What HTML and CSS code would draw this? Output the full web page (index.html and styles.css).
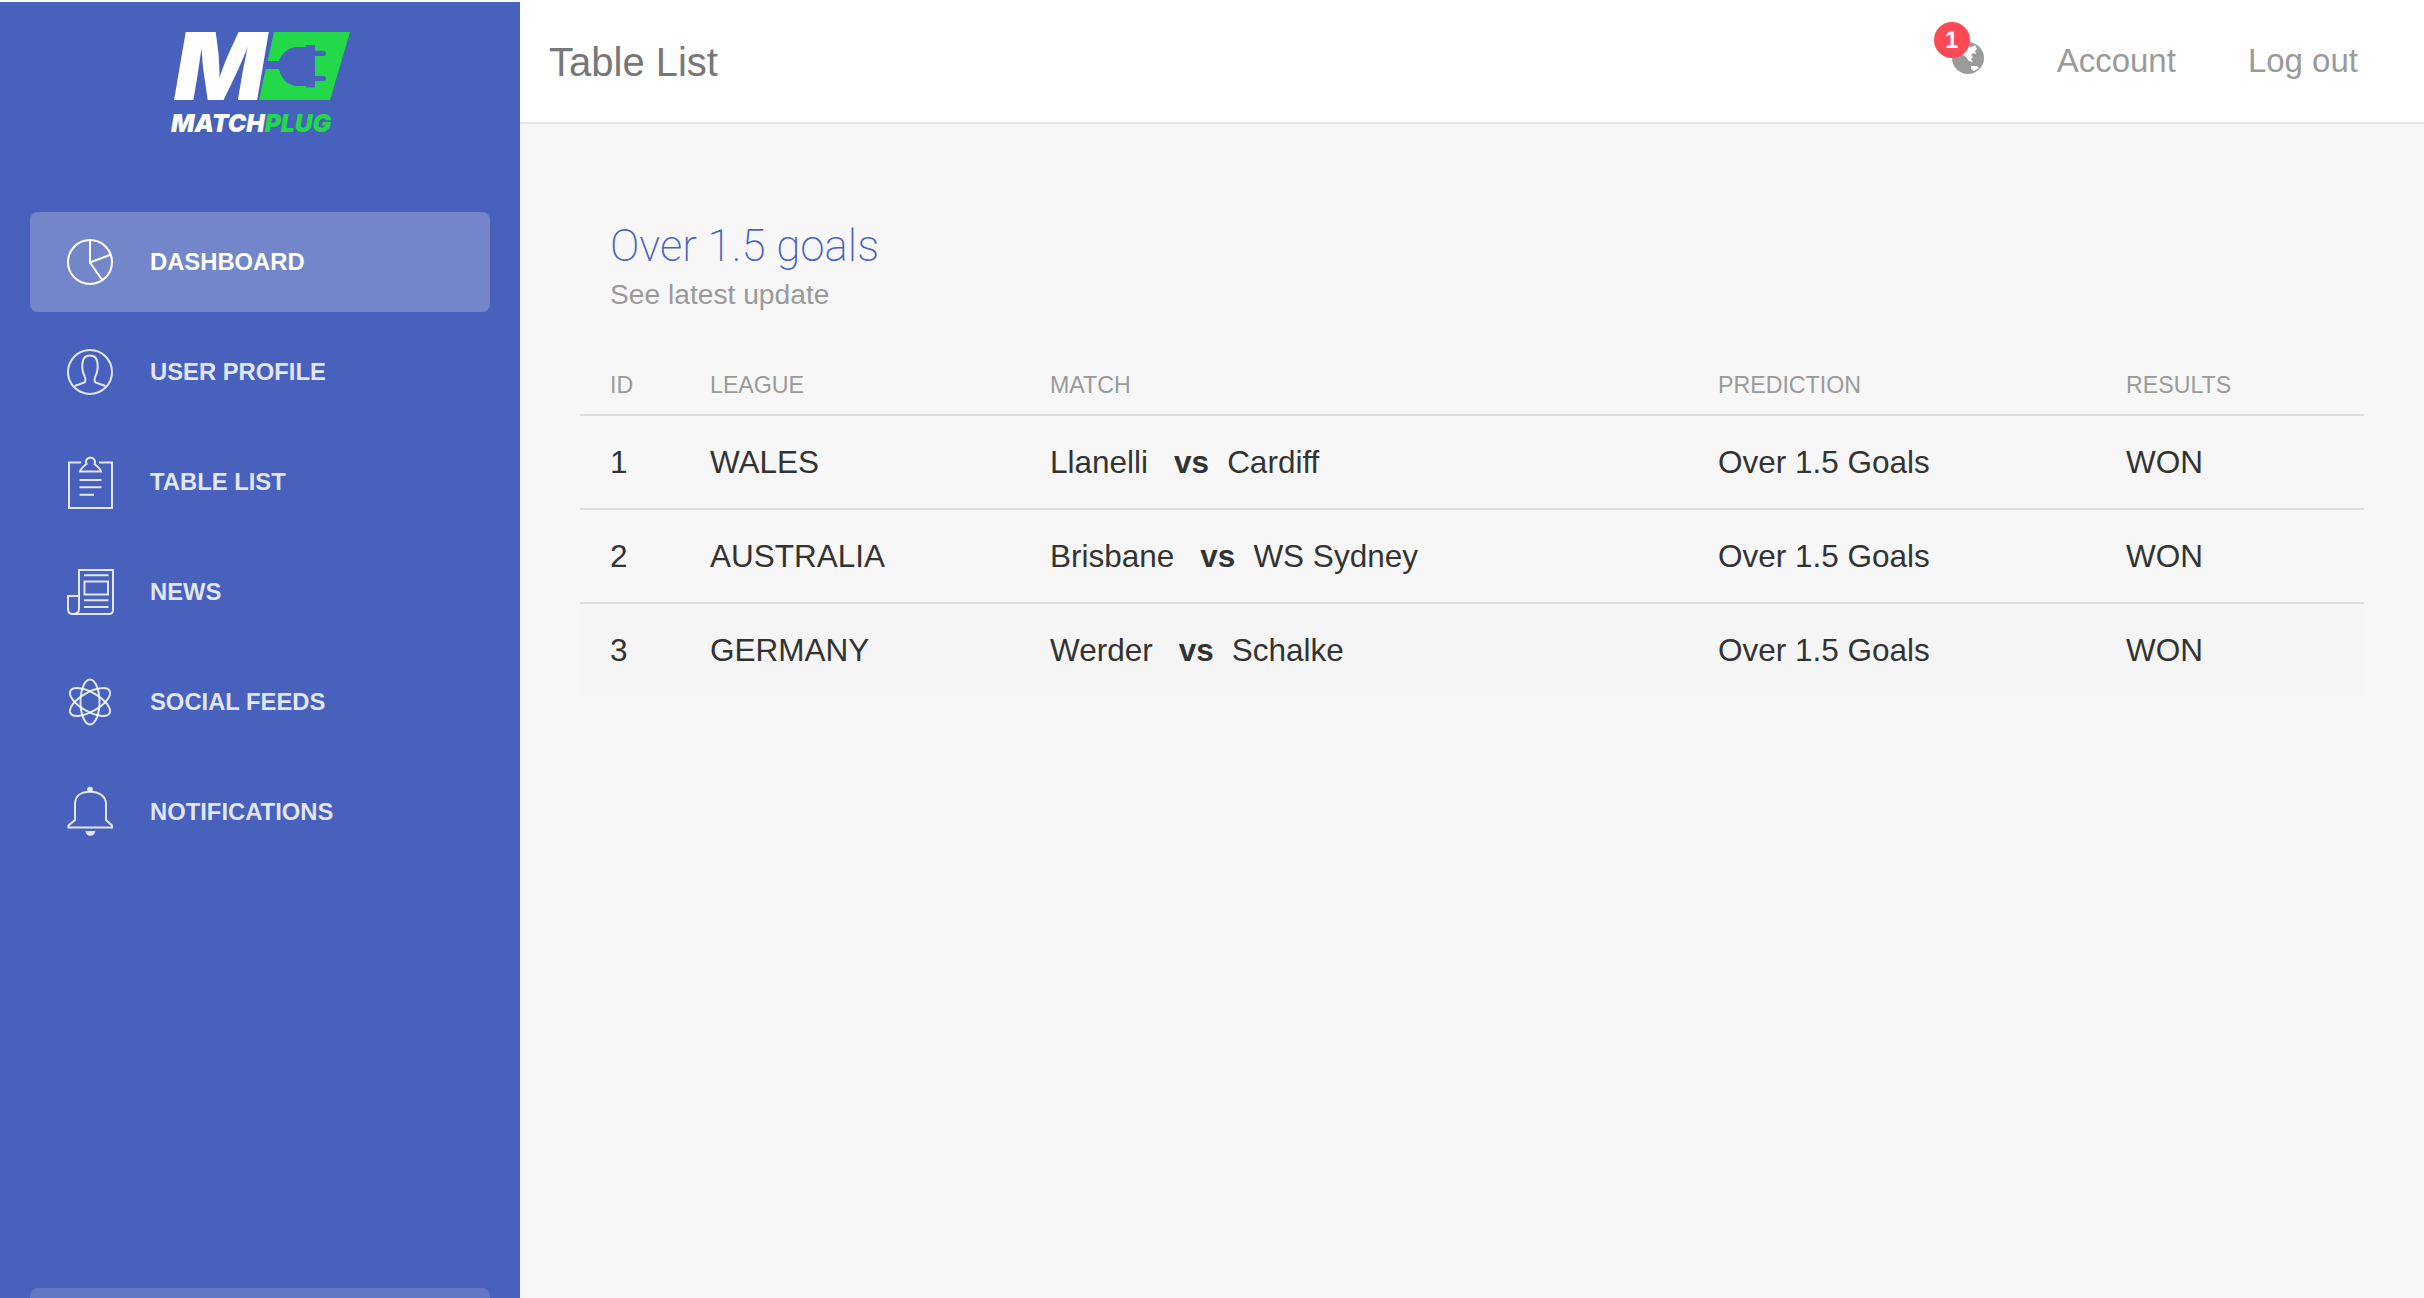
FILE: index.html
```html
<!DOCTYPE html>
<html lang="en">
<head>
<meta charset="utf-8">
<title>Table List</title>
<link rel="stylesheet" href="styles.css">
</head>
<body>
<aside class="sidebar">
  <div class="logo">
    <svg class="logo-svg" width="200" height="112" viewBox="0 0 200 112">
      <text class="logo-m" x="14" y="72" textLength="92" lengthAdjust="spacingAndGlyphs">M</text>
      <polygon class="logo-green" points="114,4 190,4 170,72 99,72"/>
      <path class="logo-plug" d="M146 19H138C127 19 121 27 119 33H106V41H119C121 50 127 58 138 58H146V59.5H155V53H163C167 53 167 48 163 48H155V28H163C167 28 167 22.7 163 22.7H155V17H146Z"/>
      <text class="logo-word" x="11" y="104" textLength="160" lengthAdjust="spacingAndGlyphs">MATCH<tspan class="logo-word-green">PLUG</tspan></text>
    </svg>
  </div>
  <nav class="nav">
    <a class="nav-item active">
      <svg class="icon" viewBox="0 0 46 46"><circle cx="23" cy="23" r="22"/><path d="M23 1V23.5L44 15.5M23 23.5L35.5 41.500"/></svg>
      <span class="nav-label">DASHBOARD</span>
    </a>
    <a class="nav-item">
      <svg class="icon" viewBox="0 0 46 46"><circle cx="23" cy="23" r="22"/><path d="M7.500 37L17.500 33.500C19 32 18.500 29.500 17.500 27C15.500 23 15 18 15.500 14C16 9 19 6.500 23 6.500C27 6.500 30 9 30.500 14C31 18 30.500 23 28.500 27C27.500 29.500 27 32 28.500 33.500L38.500 37"/></svg>
      <span class="nav-label">USER PROFILE</span>
    </a>
    <a class="nav-item">
      <svg class="icon" viewBox="0 0 46 46"><path d="M14 3.500H2V49H45V3.500H32"/><path d="M13 12.500H34C33 9 30 7 27.500 5A4.500 4.500 0 1 0 19.500 5C17 7 14 9 13 12.500Z"/><path d="M12.500 21H34.500M12.500 28.300H34.500M12.500 35.700H27"/></svg>
      <span class="nav-label">TABLE LIST</span>
    </a>
    <a class="nav-item">
      <svg class="icon" viewBox="0 0 46 46"><path d="M12 40V1H46V41C46 43.500 44.500 45 42 45H6C3 45 1 43 1 40V27H12"/><path d="M12 40C12 43 10 45 6 45"/><rect x="17.500" y="12.500" width="23.500" height="13"/><path d="M17 6.300H41.500M17 31.300H41.500M17 38H41.500"/></svg>
      <span class="nav-label">NEWS</span>
    </a>
    <a class="nav-item">
      <svg class="icon" viewBox="0 0 46 46"><ellipse cx="23" cy="23" rx="22.500" ry="9.500" transform="rotate(90 23 23)"/><ellipse cx="23" cy="23" rx="22.500" ry="9.500" transform="rotate(30 23 23)"/><ellipse cx="23" cy="23" rx="22.500" ry="9.500" transform="rotate(-30 23 23)"/></svg>
      <span class="nav-label">SOCIAL FEEDS</span>
    </a>
    <a class="nav-item">
      <svg class="icon" viewBox="0 0 46 46"><path d="M1.500 38.500H45V36.500L39 31V15C39 7 32 2.700 23 2.700C14 2.700 8 7 8 15V31L1.500 36.500Z"/><circle class="icon-fill" cx="23" cy="0.500" r="2.800"/><path class="icon-fill" d="M18.400 42H28.400C28 45 26 46.800 23.400 46.800C20.800 46.800 18.800 45 18.400 42Z"/></svg>
      <span class="nav-label">NOTIFICATIONS</span>
    </a>
  </nav>
  <a class="bottom-item"></a>
</aside>
<div class="main">
  <header class="topbar">
    <div class="page-title">Table List</div>
    <div class="top-actions">
      <div class="globe-wrap">
        <svg class="globe" width="32" height="32" viewBox="0 0 32 32">
          <circle cx="16" cy="16" r="16" fill="#9b9b9b"/>
          <path fill="#fff" d="M9 6L15 4L20 5L23 3L25 7L23 9L24 12L21 11L19 13L21 15L19 17L21 20L17 19L14 15L10 12Z"/>
          <path fill="#fff" d="M19 24L25 24L27 26L22 29L19 27Z"/>
        </svg>
        <span class="badge">1</span>
      </div>
      <a class="top-link">Account</a>
      <a class="top-link">Log out</a>
    </div>
  </header>
  <section class="content">
    <div class="card-head">
      <h2 class="card-title">Over 1.5 goals</h2>
      <p class="card-sub">See latest update</p>
    </div>
    <table class="data-table">
      <colgroup>
        <col class="col-id"><col class="col-league"><col class="col-match"><col class="col-pred"><col class="col-res">
      </colgroup>
      <thead>
        <tr><th>ID</th><th>LEAGUE</th><th>MATCH</th><th>PREDICTION</th><th>RESULTS</th></tr>
      </thead>
      <tbody>
        <tr><td>1</td><td>WALES</td><td>Llanelli<b class="vs">vs</b>Cardiff</td><td>Over 1.5 Goals</td><td>WON</td></tr>
        <tr><td>2</td><td>AUSTRALIA</td><td>Brisbane<b class="vs">vs</b>WS Sydney</td><td>Over 1.5 Goals</td><td>WON</td></tr>
        <tr class="row-hover"><td>3</td><td>GERMANY</td><td>Werder<b class="vs">vs</b>Schalke</td><td>Over 1.5 Goals</td><td>WON</td></tr>
      </tbody>
    </table>
  </section>
</div>
</body>
</html>
```

FILE: styles.css
```css
* { box-sizing: border-box; }
html, body { height: 100%; }
body {
  margin: 0;
  display: flex;
  height: 1298px;
  overflow: hidden;
  background: #f7f7f7;
  font-family: "Liberation Sans", Arial, sans-serif;
}
.sidebar {
  width: 520px;
  flex: none;
  height: 1296px;
  margin-top: 2px;
  background: #4761bc;
  display: flex;
  flex-direction: column;
  padding: 0 30px;
}
.logo { height: 210px; padding: 26px 0 0 130px; }
.logo-svg { display: block; overflow: visible; }
.logo-m {
  font-family: Inter, "Liberation Sans", sans-serif;
  font-weight: 900;
  font-style: italic;
  font-size: 94px;
  fill: #fff;
}
.logo-green { fill: #23d94a; }
.logo-plug { fill: #4761bc; }
.logo-word {
  font-family: Inter, "Liberation Sans", sans-serif;
  font-weight: 900;
  font-style: italic;
  font-size: 25px;
  fill: #fff;
}
.logo-word-green { fill: #23d94a; }
.nav { display: flex; flex-direction: column; gap: 10px; }
.nav-item {
  display: flex;
  align-items: center;
  height: 100px;
  flex: none;
  padding-left: 37px;
  border-radius: 8px;
  color: rgba(255,255,255,.85);
  stroke: rgba(255,255,255,.85);
}
.nav-item.active { background: #7386ca; color: #fff; stroke: #fff; }
.icon {
  width: 46px;
  height: 46px;
  flex: none;
  overflow: visible;
  fill: none;
  stroke-width: 2;
}
.icon-fill { fill: rgba(255,255,255,.85); stroke: none; }
.nav-label {
  margin-left: 37px;
  font-size: 23.8px;
  font-weight: 700;
}
.bottom-item {
  display: block;
  flex: none;
  height: 10px;
  margin-top: auto;
  border-radius: 8px 8px 0 0;
  background: #6378c5;
}
.main { flex: 1; min-width: 0; display: flex; flex-direction: column; }
.topbar {
  height: 124px;
  flex: none;
  background: #fff;
  border-bottom: 2px solid #e5e5e5;
  display: flex;
  align-items: center;
  justify-content: space-between;
  padding: 0 66px 0 29px;
}
.page-title { font-size: 40px; color: #777; padding-top: 2px; }
.top-actions { display: flex; align-items: center; gap: 73px; }
.top-actions .top-link + .top-link { margin-left: -1px; }
.top-link { font-size: 33px; color: #9a9a9a; }
.globe-wrap { position: relative; width: 32px; height: 32px; margin-top: -6px; }
.globe { display: block; }
.badge {
  position: absolute;
  left: -18px;
  top: -20px;
  width: 36px;
  height: 36px;
  border-radius: 50%;
  background: #ff4a55;
  color: #fff;
  font-size: 23px;
  font-weight: 700;
  line-height: 36px;
  text-align: center;
}
.content { padding: 97px 60px 0; }
.card-head { padding-left: 30px; height: 133px; }
.card-title {
  margin: 0;
  font-family: Roboto, "Liberation Sans", sans-serif;
  font-weight: 200;
  font-size: 43.8px;
  line-height: 50px;
  color: #4a64c0;
}
.card-sub {
  margin: 5px 0 0;
  font-size: 28.2px;
  line-height: 36px;
  color: #9a9a9a;
}
.data-table {
  width: 1784px;
  table-layout: fixed;
  border-collapse: collapse;
}
.col-id { width: 100px; }
.col-league { width: 340px; }
.col-match { width: 668px; }
.col-pred { width: 408px; }
.data-table th {
  height: 61px;
  padding: 3px 0 0 30px;
  border-bottom: 2px solid #ddd;
  text-align: left;
  font-size: 23.2px;
  font-weight: 400;
  color: #9a9a9a;
}
.data-table td {
  height: 94px;
  padding: 1px 0 0 30px;
  border-bottom: 2px solid #ddd;
  font-size: 31.5px;
  color: #333;
}
.data-table .row-hover td { border-bottom: 0; background: #f5f5f5; height: 93px; }
.vs { margin: 0 18px 0 26px; font-weight: 700; }
```
